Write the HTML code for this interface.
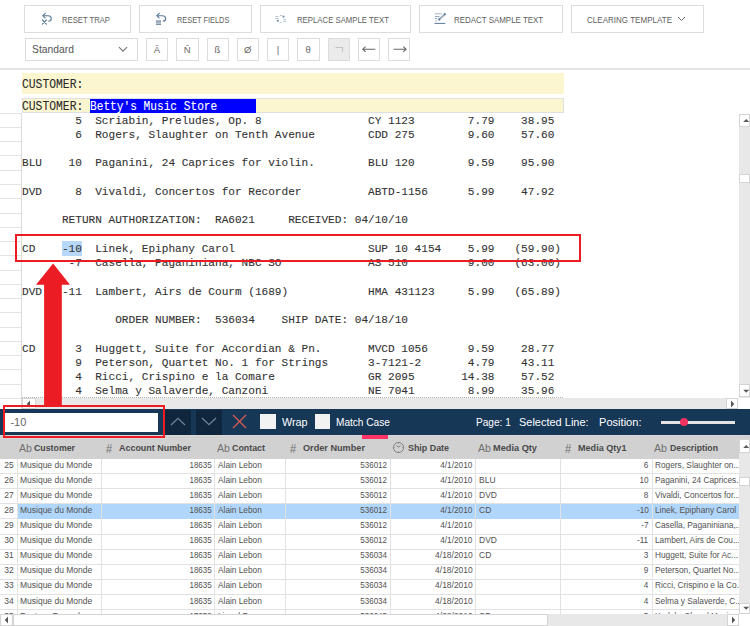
<!DOCTYPE html>
<html><head><meta charset="utf-8"><style>
html,body{margin:0;padding:0;width:750px;height:626px;overflow:hidden;background:#fff}
body > div, body > svg, body div, body svg {position:absolute}
.t{line-height:0;white-space:pre}
</style></head><body>
<div style="left:24px;top:5px;width:107px;height:28px;border:1px solid #dcdcdc;box-sizing:border-box;background:#fff"></div>
<div class="t" style="left:61.50px;top:19.81px;font-family:'Liberation Sans', sans-serif;font-size:9.5px;color:#606060;font-weight:400;transform:scaleX(0.808);transform-origin:0 0;">RESET TRAP</div>
<div style="left:139px;top:5px;width:113px;height:28px;border:1px solid #dcdcdc;box-sizing:border-box;background:#fff"></div>
<div class="t" style="left:176.70px;top:19.81px;font-family:'Liberation Sans', sans-serif;font-size:9.5px;color:#606060;font-weight:400;transform:scaleX(0.776);transform-origin:0 0;">RESET FIELDS</div>
<div style="left:259.5px;top:5px;width:151.5px;height:28px;border:1px solid #dcdcdc;box-sizing:border-box;background:#fff"></div>
<div class="t" style="left:296.70px;top:19.81px;font-family:'Liberation Sans', sans-serif;font-size:9.5px;color:#606060;font-weight:400;transform:scaleX(0.819);transform-origin:0 0;">REPLACE SAMPLE TEXT</div>
<div style="left:418.5px;top:5px;width:144.5px;height:28px;border:1px solid #dcdcdc;box-sizing:border-box;background:#fff"></div>
<div class="t" style="left:454.00px;top:19.81px;font-family:'Liberation Sans', sans-serif;font-size:9.5px;color:#606060;font-weight:400;transform:scaleX(0.835);transform-origin:0 0;">REDACT SAMPLE TEXT</div>
<div style="left:571px;top:5px;width:132.6px;height:28px;border:1px solid #dcdcdc;box-sizing:border-box;background:#fff"></div>
<div class="t" style="left:587.00px;top:19.81px;font-family:'Liberation Sans', sans-serif;font-size:9.5px;color:#606060;font-weight:400;transform:scaleX(0.846);transform-origin:0 0;">CLEARING TEMPLATE</div>
<svg style="left:38px;top:8px" width="20" height="20" viewBox="0 0 20 20">
<g fill="none" stroke="#5b7a98" stroke-width="1.15" stroke-linecap="round" stroke-linejoin="round">
<path d="M5 7.7 H10.2 C13.8 7.7 14.6 12.6 10.9 13.1"/>
<path d="M7.3 5.4 L4.9 7.7 L7.1 9.9"/>
<path d="M4.4 12 L8.4 16.1 M8.4 12 L4.4 16.1"/>
</g></svg>
<svg style="left:152px;top:8px" width="20" height="20" viewBox="0 0 20 20">
<g fill="none" stroke="#5b7a98" stroke-width="1.15" stroke-linecap="round" stroke-linejoin="round">
<path d="M5 7.7 H10.5 C14.3 7.7 14.8 12.6 11.3 13.1"/>
<path d="M7.3 5.4 L4.9 7.7 L7.1 9.9"/>
</g>
<rect x="3.9" y="12.1" width="5.1" height="3.6" fill="#5b7a98" opacity=".6"/>
<rect x="3.9" y="16" width="5.1" height="0.9" fill="#5b7a98" opacity=".9"/>
</svg>
<svg style="left:270px;top:8px" width="20" height="20" viewBox="0 0 20 20">
<g fill="#5b7a98">
<rect x="5.1" y="8" width="3.5" height="0.9" opacity=".45"/><rect x="5.1" y="10" width="3.5" height="0.9" opacity=".45"/>
<rect x="9.9" y="7.2" width="1.9" height="0.7" opacity=".7"/>
<rect x="12.6" y="7.7" width="1.8" height="1.9" opacity=".9"/>
<rect x="7" y="12" width="1.8" height="1.6" opacity=".9"/>
<rect x="9.6" y="14.2" width="2.2" height="0.7" opacity=".6"/>
<rect x="13.4" y="11.2" width="2.6" height="0.9" opacity=".5"/><rect x="13.4" y="13" width="2.6" height="0.9" opacity=".5"/>
</g></svg>
<svg style="left:428px;top:8px" width="20" height="20" viewBox="0 0 20 20">
<g fill="#5b7a98">
<rect x="6.9" y="5.1" width="6.8" height="1.3" opacity=".45"/>
<rect x="6.9" y="8.1" width="4.6" height="0.8" opacity=".8"/>
<rect x="6.9" y="10.2" width="2.4" height="0.8" opacity=".8"/>
<rect x="6.9" y="12.5" width="2.7" height="1" opacity=".45"/>
<rect x="6.5" y="14.9" width="10.9" height="1.1" opacity=".9"/>
</g>
<path d="M10.6 12 L17.3 5.8" stroke="#5b7a98" stroke-width="1.9" opacity=".6"/>
<path d="M10.6 12 L11.9 10.8 M16.2 6.8 L17.5 5.6" stroke="#5b7a98" stroke-width="2" opacity=".9"/>
</svg>
<svg style="left:677px;top:16px" width="9" height="6" viewBox="0 0 9 6"><path d="M1 1 L4.5 4.5 L8 1" fill="none" stroke="#666" stroke-width="1"/></svg>
<div style="left:24.5px;top:38px;width:113.0px;height:22.5px;border:1px solid #dcdcdc;box-sizing:border-box;background:#fff"></div>
<div class="t" style="left:32.00px;top:48.99px;font-family:'Liberation Sans', sans-serif;font-size:11px;color:#555;font-weight:400;transform:scaleX(0.938);transform-origin:0 0;">Standard</div>
<svg style="left:118px;top:45.6px" width="10" height="7" viewBox="0 0 10 7"><path d="M1 1.2 L5 5.2 L9 1.2" fill="none" stroke="#777" stroke-width="1.2"/></svg>
<div style="left:146.0px;top:38px;width:22.3px;height:22.5px;border:1px solid #dcdcdc;box-sizing:border-box;background:#fff"></div>
<div class="t" style="left:146.00px;top:50px;width:22px;text-align:center;font-family:'Liberation Sans', sans-serif;font-size:9.5px;color:#666">Ã</div>
<div style="left:176.25px;top:38px;width:22.3px;height:22.5px;border:1px solid #dcdcdc;box-sizing:border-box;background:#fff"></div>
<div class="t" style="left:176.25px;top:50px;width:22px;text-align:center;font-family:'Liberation Sans', sans-serif;font-size:9.5px;color:#666">Ñ</div>
<div style="left:206.5px;top:38px;width:22.3px;height:22.5px;border:1px solid #dcdcdc;box-sizing:border-box;background:#fff"></div>
<div class="t" style="left:206.50px;top:50px;width:22px;text-align:center;font-family:'Liberation Sans', sans-serif;font-size:9.5px;color:#666">ß</div>
<div style="left:236.75px;top:38px;width:22.3px;height:22.5px;border:1px solid #dcdcdc;box-sizing:border-box;background:#fff"></div>
<div class="t" style="left:236.75px;top:50px;width:22px;text-align:center;font-family:'Liberation Sans', sans-serif;font-size:9.5px;color:#666">Ø</div>
<div style="left:267.0px;top:38px;width:22.3px;height:22.5px;border:1px solid #dcdcdc;box-sizing:border-box;background:#fff"></div>
<div class="t" style="left:267.00px;top:50px;width:22px;text-align:center;font-family:'Liberation Sans', sans-serif;font-size:9.5px;color:#666">|</div>
<div style="left:297.25px;top:38px;width:22.3px;height:22.5px;border:1px solid #dcdcdc;box-sizing:border-box;background:#fff"></div>
<div class="t" style="left:297.25px;top:50px;width:22px;text-align:center;font-family:'Liberation Sans', sans-serif;font-size:9.5px;color:#666">θ</div>
<div style="left:327.5px;top:38px;width:22.3px;height:22.5px;border:1px solid #dcdcdc;box-sizing:border-box;background:#ebebeb"></div>
<div style="left:357.75px;top:38px;width:22.3px;height:22.5px;border:1px solid #dcdcdc;box-sizing:border-box;background:#fff"></div>
<div style="left:388.0px;top:38px;width:22.3px;height:22.5px;border:1px solid #dcdcdc;box-sizing:border-box;background:#fff"></div>
<svg style="left:335px;top:46px" width="9" height="7"><path d="M0.5 1.5 H7.5 V5.8" fill="none" stroke="#c2c2c2" stroke-width="1.1"/></svg>
<svg style="left:362px;top:46px" width="14" height="7" viewBox="0 0 14 7"><path d="M0.8 3.2 H13.3 M3.6 0.6 L0.8 3.2 L3.6 5.8" fill="none" stroke="#666" stroke-width="1.1"/></svg>
<svg style="left:393px;top:46px" width="14" height="7" viewBox="0 0 14 7"><path d="M0.6 3.2 H13.1 M10.3 0.6 L13.1 3.2 L10.3 5.8" fill="none" stroke="#666" stroke-width="1.1"/></svg>
<div style="left:0px;top:68.3px;width:750px;height:1.3px;background:#e4e4e4"></div>
<div style="left:22px;top:72.6px;width:542.2px;height:21.6px;background:#fcf6d0"></div>
<div style="left:22px;top:97.6px;width:541.8px;height:15.8px;background:#fcf6d0;border:1px solid #e0e0e0;box-sizing:border-box"></div>
<div style="left:89.9px;top:98.5px;width:166.3px;height:14.0px;background:#0000ff"></div>
<div style="left:21px;top:113px;width:1px;height:296px;background:#dcdcdc"></div>
<div style="left:0px;top:112.7px;width:21px;height:1.0px;background:#e3e3e3"></div>
<div style="left:0px;top:126.96px;width:21px;height:1.0px;background:#e3e3e3"></div>
<div style="left:0px;top:141.22px;width:21px;height:1.0px;background:#e3e3e3"></div>
<div style="left:0px;top:155.48px;width:21px;height:1.0px;background:#e3e3e3"></div>
<div style="left:0px;top:169.74px;width:21px;height:1.0px;background:#e3e3e3"></div>
<div style="left:0px;top:184.0px;width:21px;height:1.0px;background:#e3e3e3"></div>
<div style="left:0px;top:198.26px;width:21px;height:1.0px;background:#e3e3e3"></div>
<div style="left:0px;top:212.52px;width:21px;height:1.0px;background:#e3e3e3"></div>
<div style="left:0px;top:226.78px;width:21px;height:1.0px;background:#e3e3e3"></div>
<div style="left:0px;top:241.04px;width:21px;height:1.0px;background:#e3e3e3"></div>
<div style="left:0px;top:255.3px;width:21px;height:1.0px;background:#e3e3e3"></div>
<div style="left:0px;top:269.56px;width:21px;height:1.0px;background:#e3e3e3"></div>
<div style="left:0px;top:283.82px;width:21px;height:1.0px;background:#e3e3e3"></div>
<div style="left:0px;top:298.08px;width:21px;height:1.0px;background:#e3e3e3"></div>
<div style="left:0px;top:312.34px;width:21px;height:1.0px;background:#e3e3e3"></div>
<div style="left:0px;top:326.6px;width:21px;height:1.0px;background:#e3e3e3"></div>
<div style="left:0px;top:340.86px;width:21px;height:1.0px;background:#e3e3e3"></div>
<div style="left:0px;top:355.12px;width:21px;height:1.0px;background:#e3e3e3"></div>
<div style="left:0px;top:369.38px;width:21px;height:1.0px;background:#e3e3e3"></div>
<div style="left:0px;top:383.64px;width:21px;height:1.0px;background:#e3e3e3"></div>
<div style="left:0px;top:397.9px;width:21px;height:1.0px;background:#e3e3e3"></div>
<div style="left:62px;top:241.4px;width:20px;height:14.3px;background:#b7d8fa"></div>
<div class="t" style="left:22.20px;top:85.31px;font-family:'Liberation Mono', monospace;font-size:12px;color:#2a2a2a;font-weight:400;transform:scaleX(0.945);transform-origin:0 0;-webkit-text-stroke:0.1px #2a2a2a">CUSTOMER:</div>
<div class="t" style="left:22.20px;top:107.31px;font-family:'Liberation Mono', monospace;font-size:12px;color:#2a2a2a;font-weight:400;transform:scaleX(0.945);transform-origin:0 0;-webkit-text-stroke:0.1px #2a2a2a">CUSTOMER:</div>
<div class="t" style="left:89.80px;top:107.31px;font-family:'Liberation Mono', monospace;font-size:12px;color:#fff;font-weight:400;transform:scaleX(0.93);transform-origin:0 0;-webkit-text-stroke:0.1px #fff">Betty's&nbsp;Music&nbsp;Store</div>
<div style="left:22px;top:113.4px;width:717px;height:284px;overflow:hidden">
<div class="t" style="left:-0.4px;top:7.16px;font-family:'Liberation Mono', monospace;font-size:11.8px;color:#333;transform:scaleX(0.94);transform-origin:0 0;white-space:pre;-webkit-text-stroke:0.1px #333">        5  Scriabin, Preludes, Op. 8                CY 1123        7.79    38.95</div>
<div class="t" style="left:-0.4px;top:21.42px;font-family:'Liberation Mono', monospace;font-size:11.8px;color:#333;transform:scaleX(0.94);transform-origin:0 0;white-space:pre;-webkit-text-stroke:0.1px #333">        6  Rogers, Slaughter on Tenth Avenue        CDD 275        9.60    57.60</div>
<div class="t" style="left:-0.4px;top:49.94px;font-family:'Liberation Mono', monospace;font-size:11.8px;color:#333;transform:scaleX(0.94);transform-origin:0 0;white-space:pre;-webkit-text-stroke:0.1px #333">BLU    10  Paganini, 24 Caprices for violin.        BLU 120        9.59    95.90</div>
<div class="t" style="left:-0.4px;top:78.46px;font-family:'Liberation Mono', monospace;font-size:11.8px;color:#333;transform:scaleX(0.94);transform-origin:0 0;white-space:pre;-webkit-text-stroke:0.1px #333">DVD     8  Vivaldi, Concertos for Recorder          ABTD-1156      5.99    47.92</div>
<div class="t" style="left:-0.4px;top:106.98px;font-family:'Liberation Mono', monospace;font-size:11.8px;color:#333;transform:scaleX(0.94);transform-origin:0 0;white-space:pre;-webkit-text-stroke:0.1px #333">      RETURN AUTHORIZATION:  RA6021     RECEIVED: 04/10/10</div>
<div class="t" style="left:-0.4px;top:135.50px;font-family:'Liberation Mono', monospace;font-size:11.8px;color:#333;transform:scaleX(0.94);transform-origin:0 0;white-space:pre;-webkit-text-stroke:0.1px #333">CD    -10  Linek, Epiphany Carol                    SUP 10 4154    5.99   (59.90)</div>
<div class="t" style="left:-0.4px;top:149.76px;font-family:'Liberation Mono', monospace;font-size:11.8px;color:#333;transform:scaleX(0.94);transform-origin:0 0;white-space:pre;-webkit-text-stroke:0.1px #333">       -7  Casella, Paganiniana, NBC SO             AS 510         9.00   (63.00)</div>
<div class="t" style="left:-0.4px;top:178.28px;font-family:'Liberation Mono', monospace;font-size:11.8px;color:#333;transform:scaleX(0.94);transform-origin:0 0;white-space:pre;-webkit-text-stroke:0.1px #333">DVD   -11  Lambert, Airs de Courm (1689)            HMA 431123     5.99   (65.89)</div>
<div class="t" style="left:-0.4px;top:206.80px;font-family:'Liberation Mono', monospace;font-size:11.8px;color:#333;transform:scaleX(0.94);transform-origin:0 0;white-space:pre;-webkit-text-stroke:0.1px #333">              ORDER NUMBER:  536034    SHIP DATE: 04/18/10</div>
<div class="t" style="left:-0.4px;top:235.32px;font-family:'Liberation Mono', monospace;font-size:11.8px;color:#333;transform:scaleX(0.94);transform-origin:0 0;white-space:pre;-webkit-text-stroke:0.1px #333">CD      3  Huggett, Suite for Accordian &amp; Pn.       MVCD 1056      9.59    28.77</div>
<div class="t" style="left:-0.4px;top:249.58px;font-family:'Liberation Mono', monospace;font-size:11.8px;color:#333;transform:scaleX(0.94);transform-origin:0 0;white-space:pre;-webkit-text-stroke:0.1px #333">        9  Peterson, Quartet No. 1 for Strings      3-7121-2       4.79    43.11</div>
<div class="t" style="left:-0.4px;top:263.84px;font-family:'Liberation Mono', monospace;font-size:11.8px;color:#333;transform:scaleX(0.94);transform-origin:0 0;white-space:pre;-webkit-text-stroke:0.1px #333">        4  Ricci, Crispino e la Comare              GR 2095       14.38    57.52</div>
<div class="t" style="left:-0.4px;top:278.10px;font-family:'Liberation Mono', monospace;font-size:11.8px;color:#333;transform:scaleX(0.94);transform-origin:0 0;white-space:pre;-webkit-text-stroke:0.1px #333">        4  Selma y Salaverde, Canzoni               NE 7041        8.99    35.96</div>
</div>
<div style="left:15.4px;top:234px;width:565.6px;height:27.8px;border:2px solid #ec1c24;box-sizing:border-box"></div>
<div style="left:739.4px;top:114px;width:10.6px;height:283.5px;background:#e8e8e8"></div>
<div style="left:739.4px;top:114px;width:10.6px;height:13.2px;background:#fff;border:1px solid #d4d4d4;box-sizing:border-box"></div>
<div style="left:739.4px;top:174.3px;width:10.6px;height:8.4px;background:#fff;border:1px solid #d4d4d4;box-sizing:border-box"></div>
<div style="left:739.4px;top:384.2px;width:10.6px;height:12.7px;background:#fff;border:1px solid #d4d4d4;box-sizing:border-box"></div>
<svg style="left:742px;top:118px" width="8" height="5"><path d="M1.2 4 L4.2 1 L7.2 4 Z" fill="#5a5a5a"/></svg>
<svg style="left:742px;top:389px" width="8" height="5"><path d="M1.2 0.8 L4.2 3.8 L7.2 0.8 Z" fill="#5a5a5a"/></svg>
<div style="left:22px;top:397.5px;width:717.4px;height:11.7px;background:#e8e8e8"></div>
<div style="left:22px;top:397.3px;width:541.2px;height:1.0px;border-top:1px dotted #b0b0b0;box-sizing:border-box"></div>
<div style="left:22px;top:397.5px;width:13.5px;height:11.3px;background:#fff;border:1px solid #d4d4d4;box-sizing:border-box"></div>
<div style="left:726.2px;top:397.5px;width:12.2px;height:11.3px;background:#fff;border:1px solid #d4d4d4;box-sizing:border-box"></div>
<div style="left:738.4px;top:397.5px;width:11.6px;height:11.7px;background:#fff"></div>
<svg style="left:26px;top:400px" width="5" height="8"><path d="M4 0.5 L0.8 4 L4 7.5 Z" fill="#555"/></svg>
<svg style="left:730px;top:400px" width="5" height="8"><path d="M1 0.5 L4.2 4 L1 7.5 Z" fill="#555"/></svg>
<svg style="left:35px;top:263px" width="36" height="143" viewBox="0 0 36 143"><path d="M18.1 0.5 L35 21.7 L26.8 21.7 L26.8 142.3 L9.1 142.3 L9.1 21.7 L1 21.7 Z" fill="#ec1c24"/></svg>
<div style="left:0px;top:409px;width:750px;height:26.2px;background:#173757"></div>
<div style="left:0px;top:435.2px;width:750px;height:3.8px;background:#d6d6d6"></div>
<div style="left:0px;top:437px;width:750px;height:1.3px;background:#cacaca"></div>
<div style="left:3.8px;top:412.5px;width:154.2px;height:19.0px;background:#fff"></div>
<div class="t" style="left:10.40px;top:422.19px;font-family:'Liberation Sans', sans-serif;font-size:11px;color:#666;font-weight:400;transform:scaleX(1.0);transform-origin:0 0;">-10</div>
<div style="left:165.4px;top:410px;width:25.6px;height:24.5px;background:#10263d"></div>
<div style="left:196.2px;top:410px;width:25.7px;height:24.5px;background:#10263d"></div>
<svg style="left:170px;top:417px" width="16" height="9"><path d="M1 8 L8 1.3 L15 8" fill="none" stroke="#6d8399" stroke-width="1.3"/></svg>
<svg style="left:201px;top:417px" width="16" height="9"><path d="M1 1 L8 7.7 L15 1" fill="none" stroke="#6d8399" stroke-width="1.3"/></svg>
<svg style="left:232px;top:414px" width="15" height="15"><path d="M1 1 L14 14 M14 1 L1 14" fill="none" stroke="#d25a52" stroke-width="1.4"/></svg>
<div style="left:260.2px;top:413.8px;width:15.7px;height:15.2px;background:#f2f2f2"></div>
<div style="left:314.6px;top:413.8px;width:15.7px;height:15.2px;background:#f2f2f2"></div>
<div class="t" style="left:281.80px;top:421.69px;font-family:'Liberation Sans', sans-serif;font-size:11px;color:#fff;font-weight:400;transform:scaleX(0.981);transform-origin:0 0;">Wrap</div>
<div class="t" style="left:336.20px;top:421.69px;font-family:'Liberation Sans', sans-serif;font-size:11px;color:#fff;font-weight:400;transform:scaleX(0.917);transform-origin:0 0;">Match&nbsp;Case</div>
<div class="t" style="left:475.50px;top:421.69px;font-family:'Liberation Sans', sans-serif;font-size:11px;color:#fff;font-weight:400;transform:scaleX(0.918);transform-origin:0 0;">Page:&nbsp;1</div>
<div class="t" style="left:519.20px;top:421.69px;font-family:'Liberation Sans', sans-serif;font-size:11px;color:#fff;font-weight:400;transform:scaleX(0.998);transform-origin:0 0;">Selected&nbsp;Line:</div>
<div class="t" style="left:599.20px;top:421.69px;font-family:'Liberation Sans', sans-serif;font-size:11px;color:#fff;font-weight:400;transform:scaleX(1.007);transform-origin:0 0;">Position:</div>
<div style="left:661px;top:421px;width:73.7px;height:3px;background:#e4e4e4"></div>
<div style="left:680px;top:418.4px;width:8px;height:8px;border-radius:50%;background:#f2325f"></div>
<div style="left:361.8px;top:435.4px;width:26.2px;height:3.8px;background:#ff3366"></div>
<div style="left:2.5px;top:405.3px;width:162.2px;height:32.5px;border:2px solid #ec1c24;box-sizing:border-box"></div>
<div style="left:0px;top:439px;width:739.4px;height:20px;background:#d1d1d1"></div>
<div style="left:0;top:0;width:750px;height:614.2px;overflow:hidden">
<div style="left:0px;top:473.1px;width:739.4px;height:1.0px;background:#e2e2e2"></div>
<div class="t" style="right:736.80px;top:464.67px;font-family:'Liberation Sans', sans-serif;font-size:9.6px;color:#525252;font-weight:400;transform:scaleX(0.885);transform-origin:100% 0;">25</div>
<div class="t" style="left:19.60px;top:464.67px;font-family:'Liberation Sans', sans-serif;font-size:9.6px;color:#525252;font-weight:400;transform:scaleX(0.885);transform-origin:0 0;">Musique du Monde</div>
<div class="t" style="right:538.00px;top:464.67px;font-family:'Liberation Sans', sans-serif;font-size:9.6px;color:#525252;font-weight:400;transform:scaleX(0.833);transform-origin:100% 0;">18635</div>
<div class="t" style="left:218.00px;top:464.67px;font-family:'Liberation Sans', sans-serif;font-size:9.6px;color:#525252;font-weight:400;transform:scaleX(0.865);transform-origin:0 0;">Alain Lebon</div>
<div class="t" style="right:363.00px;top:464.67px;font-family:'Liberation Sans', sans-serif;font-size:9.6px;color:#525252;font-weight:400;transform:scaleX(0.833);transform-origin:100% 0;">536012</div>
<div class="t" style="right:277.40px;top:464.67px;font-family:'Liberation Sans', sans-serif;font-size:9.6px;color:#525252;font-weight:400;transform:scaleX(0.86);transform-origin:100% 0;">4/1/2010</div>
<div class="t" style="left:478.50px;top:464.67px;font-family:'Liberation Sans', sans-serif;font-size:9.6px;color:#525252;font-weight:400;transform:scaleX(0.885);transform-origin:0 0;"></div>
<div class="t" style="right:101.50px;top:464.67px;font-family:'Liberation Sans', sans-serif;font-size:9.6px;color:#525252;font-weight:400;transform:scaleX(0.854);transform-origin:100% 0;">6</div>
<div class="t" style="left:655.00px;top:464.67px;font-family:'Liberation Sans', sans-serif;font-size:9.6px;color:#525252;font-weight:400;transform:scaleX(0.865);transform-origin:0 0;">Rogers, Slaughter on...</div>
<div style="left:0px;top:488.2px;width:739.4px;height:1.0px;background:#e2e2e2"></div>
<div class="t" style="right:736.80px;top:479.77px;font-family:'Liberation Sans', sans-serif;font-size:9.6px;color:#525252;font-weight:400;transform:scaleX(0.885);transform-origin:100% 0;">26</div>
<div class="t" style="left:19.60px;top:479.77px;font-family:'Liberation Sans', sans-serif;font-size:9.6px;color:#525252;font-weight:400;transform:scaleX(0.885);transform-origin:0 0;">Musique du Monde</div>
<div class="t" style="right:538.00px;top:479.77px;font-family:'Liberation Sans', sans-serif;font-size:9.6px;color:#525252;font-weight:400;transform:scaleX(0.833);transform-origin:100% 0;">18635</div>
<div class="t" style="left:218.00px;top:479.77px;font-family:'Liberation Sans', sans-serif;font-size:9.6px;color:#525252;font-weight:400;transform:scaleX(0.865);transform-origin:0 0;">Alain Lebon</div>
<div class="t" style="right:363.00px;top:479.77px;font-family:'Liberation Sans', sans-serif;font-size:9.6px;color:#525252;font-weight:400;transform:scaleX(0.833);transform-origin:100% 0;">536012</div>
<div class="t" style="right:277.40px;top:479.77px;font-family:'Liberation Sans', sans-serif;font-size:9.6px;color:#525252;font-weight:400;transform:scaleX(0.86);transform-origin:100% 0;">4/1/2010</div>
<div class="t" style="left:478.50px;top:479.77px;font-family:'Liberation Sans', sans-serif;font-size:9.6px;color:#525252;font-weight:400;transform:scaleX(0.885);transform-origin:0 0;">BLU</div>
<div class="t" style="right:101.50px;top:479.77px;font-family:'Liberation Sans', sans-serif;font-size:9.6px;color:#525252;font-weight:400;transform:scaleX(0.854);transform-origin:100% 0;">10</div>
<div class="t" style="left:655.00px;top:479.77px;font-family:'Liberation Sans', sans-serif;font-size:9.6px;color:#525252;font-weight:400;transform:scaleX(0.865);transform-origin:0 0;">Paganini, 24 Caprices...</div>
<div style="left:0px;top:503.3px;width:739.4px;height:1.0px;background:#e2e2e2"></div>
<div class="t" style="right:736.80px;top:494.87px;font-family:'Liberation Sans', sans-serif;font-size:9.6px;color:#525252;font-weight:400;transform:scaleX(0.885);transform-origin:100% 0;">27</div>
<div class="t" style="left:19.60px;top:494.87px;font-family:'Liberation Sans', sans-serif;font-size:9.6px;color:#525252;font-weight:400;transform:scaleX(0.885);transform-origin:0 0;">Musique du Monde</div>
<div class="t" style="right:538.00px;top:494.87px;font-family:'Liberation Sans', sans-serif;font-size:9.6px;color:#525252;font-weight:400;transform:scaleX(0.833);transform-origin:100% 0;">18635</div>
<div class="t" style="left:218.00px;top:494.87px;font-family:'Liberation Sans', sans-serif;font-size:9.6px;color:#525252;font-weight:400;transform:scaleX(0.865);transform-origin:0 0;">Alain Lebon</div>
<div class="t" style="right:363.00px;top:494.87px;font-family:'Liberation Sans', sans-serif;font-size:9.6px;color:#525252;font-weight:400;transform:scaleX(0.833);transform-origin:100% 0;">536012</div>
<div class="t" style="right:277.40px;top:494.87px;font-family:'Liberation Sans', sans-serif;font-size:9.6px;color:#525252;font-weight:400;transform:scaleX(0.86);transform-origin:100% 0;">4/1/2010</div>
<div class="t" style="left:478.50px;top:494.87px;font-family:'Liberation Sans', sans-serif;font-size:9.6px;color:#525252;font-weight:400;transform:scaleX(0.885);transform-origin:0 0;">DVD</div>
<div class="t" style="right:101.50px;top:494.87px;font-family:'Liberation Sans', sans-serif;font-size:9.6px;color:#525252;font-weight:400;transform:scaleX(0.854);transform-origin:100% 0;">8</div>
<div class="t" style="left:655.00px;top:494.87px;font-family:'Liberation Sans', sans-serif;font-size:9.6px;color:#525252;font-weight:400;transform:scaleX(0.865);transform-origin:0 0;">Vivaldi, Concertos for...</div>
<div style="left:0px;top:518.4px;width:739.4px;height:1.0px;background:#e2e2e2"></div>
<div style="left:17.5px;top:504.3px;width:721.9px;height:15.1px;background:#b1d6fb"></div>
<div class="t" style="right:736.80px;top:509.97px;font-family:'Liberation Sans', sans-serif;font-size:9.6px;color:#525252;font-weight:400;transform:scaleX(0.885);transform-origin:100% 0;">28</div>
<div class="t" style="left:19.60px;top:509.97px;font-family:'Liberation Sans', sans-serif;font-size:9.6px;color:#525252;font-weight:400;transform:scaleX(0.885);transform-origin:0 0;">Musique du Monde</div>
<div class="t" style="right:538.00px;top:509.97px;font-family:'Liberation Sans', sans-serif;font-size:9.6px;color:#525252;font-weight:400;transform:scaleX(0.833);transform-origin:100% 0;">18635</div>
<div class="t" style="left:218.00px;top:509.97px;font-family:'Liberation Sans', sans-serif;font-size:9.6px;color:#525252;font-weight:400;transform:scaleX(0.865);transform-origin:0 0;">Alain Lebon</div>
<div class="t" style="right:363.00px;top:509.97px;font-family:'Liberation Sans', sans-serif;font-size:9.6px;color:#525252;font-weight:400;transform:scaleX(0.833);transform-origin:100% 0;">536012</div>
<div class="t" style="right:277.40px;top:509.97px;font-family:'Liberation Sans', sans-serif;font-size:9.6px;color:#525252;font-weight:400;transform:scaleX(0.86);transform-origin:100% 0;">4/1/2010</div>
<div class="t" style="left:478.50px;top:509.97px;font-family:'Liberation Sans', sans-serif;font-size:9.6px;color:#525252;font-weight:400;transform:scaleX(0.885);transform-origin:0 0;">CD</div>
<div class="t" style="right:101.50px;top:509.97px;font-family:'Liberation Sans', sans-serif;font-size:9.6px;color:#525252;font-weight:400;transform:scaleX(0.854);transform-origin:100% 0;">-10</div>
<div class="t" style="left:655.00px;top:509.97px;font-family:'Liberation Sans', sans-serif;font-size:9.6px;color:#525252;font-weight:400;transform:scaleX(0.865);transform-origin:0 0;">Linek, Epiphany Carol</div>
<div style="left:0px;top:533.5px;width:739.4px;height:1.0px;background:#e2e2e2"></div>
<div class="t" style="right:736.80px;top:525.07px;font-family:'Liberation Sans', sans-serif;font-size:9.6px;color:#525252;font-weight:400;transform:scaleX(0.885);transform-origin:100% 0;">29</div>
<div class="t" style="left:19.60px;top:525.07px;font-family:'Liberation Sans', sans-serif;font-size:9.6px;color:#525252;font-weight:400;transform:scaleX(0.885);transform-origin:0 0;">Musique du Monde</div>
<div class="t" style="right:538.00px;top:525.07px;font-family:'Liberation Sans', sans-serif;font-size:9.6px;color:#525252;font-weight:400;transform:scaleX(0.833);transform-origin:100% 0;">18635</div>
<div class="t" style="left:218.00px;top:525.07px;font-family:'Liberation Sans', sans-serif;font-size:9.6px;color:#525252;font-weight:400;transform:scaleX(0.865);transform-origin:0 0;">Alain Lebon</div>
<div class="t" style="right:363.00px;top:525.07px;font-family:'Liberation Sans', sans-serif;font-size:9.6px;color:#525252;font-weight:400;transform:scaleX(0.833);transform-origin:100% 0;">536012</div>
<div class="t" style="right:277.40px;top:525.07px;font-family:'Liberation Sans', sans-serif;font-size:9.6px;color:#525252;font-weight:400;transform:scaleX(0.86);transform-origin:100% 0;">4/1/2010</div>
<div class="t" style="left:478.50px;top:525.07px;font-family:'Liberation Sans', sans-serif;font-size:9.6px;color:#525252;font-weight:400;transform:scaleX(0.885);transform-origin:0 0;"></div>
<div class="t" style="right:101.50px;top:525.07px;font-family:'Liberation Sans', sans-serif;font-size:9.6px;color:#525252;font-weight:400;transform:scaleX(0.854);transform-origin:100% 0;">-7</div>
<div class="t" style="left:655.00px;top:525.07px;font-family:'Liberation Sans', sans-serif;font-size:9.6px;color:#525252;font-weight:400;transform:scaleX(0.865);transform-origin:0 0;">Casella, Paganiniana,...</div>
<div style="left:0px;top:548.6px;width:739.4px;height:1.0px;background:#e2e2e2"></div>
<div class="t" style="right:736.80px;top:540.17px;font-family:'Liberation Sans', sans-serif;font-size:9.6px;color:#525252;font-weight:400;transform:scaleX(0.885);transform-origin:100% 0;">30</div>
<div class="t" style="left:19.60px;top:540.17px;font-family:'Liberation Sans', sans-serif;font-size:9.6px;color:#525252;font-weight:400;transform:scaleX(0.885);transform-origin:0 0;">Musique du Monde</div>
<div class="t" style="right:538.00px;top:540.17px;font-family:'Liberation Sans', sans-serif;font-size:9.6px;color:#525252;font-weight:400;transform:scaleX(0.833);transform-origin:100% 0;">18635</div>
<div class="t" style="left:218.00px;top:540.17px;font-family:'Liberation Sans', sans-serif;font-size:9.6px;color:#525252;font-weight:400;transform:scaleX(0.865);transform-origin:0 0;">Alain Lebon</div>
<div class="t" style="right:363.00px;top:540.17px;font-family:'Liberation Sans', sans-serif;font-size:9.6px;color:#525252;font-weight:400;transform:scaleX(0.833);transform-origin:100% 0;">536012</div>
<div class="t" style="right:277.40px;top:540.17px;font-family:'Liberation Sans', sans-serif;font-size:9.6px;color:#525252;font-weight:400;transform:scaleX(0.86);transform-origin:100% 0;">4/1/2010</div>
<div class="t" style="left:478.50px;top:540.17px;font-family:'Liberation Sans', sans-serif;font-size:9.6px;color:#525252;font-weight:400;transform:scaleX(0.885);transform-origin:0 0;">DVD</div>
<div class="t" style="right:101.50px;top:540.17px;font-family:'Liberation Sans', sans-serif;font-size:9.6px;color:#525252;font-weight:400;transform:scaleX(0.854);transform-origin:100% 0;">-11</div>
<div class="t" style="left:655.00px;top:540.17px;font-family:'Liberation Sans', sans-serif;font-size:9.6px;color:#525252;font-weight:400;transform:scaleX(0.865);transform-origin:0 0;">Lambert, Airs de Cou...</div>
<div style="left:0px;top:563.7px;width:739.4px;height:1.0px;background:#e2e2e2"></div>
<div class="t" style="right:736.80px;top:555.27px;font-family:'Liberation Sans', sans-serif;font-size:9.6px;color:#525252;font-weight:400;transform:scaleX(0.885);transform-origin:100% 0;">31</div>
<div class="t" style="left:19.60px;top:555.27px;font-family:'Liberation Sans', sans-serif;font-size:9.6px;color:#525252;font-weight:400;transform:scaleX(0.885);transform-origin:0 0;">Musique du Monde</div>
<div class="t" style="right:538.00px;top:555.27px;font-family:'Liberation Sans', sans-serif;font-size:9.6px;color:#525252;font-weight:400;transform:scaleX(0.833);transform-origin:100% 0;">18635</div>
<div class="t" style="left:218.00px;top:555.27px;font-family:'Liberation Sans', sans-serif;font-size:9.6px;color:#525252;font-weight:400;transform:scaleX(0.865);transform-origin:0 0;">Alain Lebon</div>
<div class="t" style="right:363.00px;top:555.27px;font-family:'Liberation Sans', sans-serif;font-size:9.6px;color:#525252;font-weight:400;transform:scaleX(0.833);transform-origin:100% 0;">536034</div>
<div class="t" style="right:277.40px;top:555.27px;font-family:'Liberation Sans', sans-serif;font-size:9.6px;color:#525252;font-weight:400;transform:scaleX(0.88);transform-origin:100% 0;">4/18/2010</div>
<div class="t" style="left:478.50px;top:555.27px;font-family:'Liberation Sans', sans-serif;font-size:9.6px;color:#525252;font-weight:400;transform:scaleX(0.885);transform-origin:0 0;">CD</div>
<div class="t" style="right:101.50px;top:555.27px;font-family:'Liberation Sans', sans-serif;font-size:9.6px;color:#525252;font-weight:400;transform:scaleX(0.854);transform-origin:100% 0;">3</div>
<div class="t" style="left:655.00px;top:555.27px;font-family:'Liberation Sans', sans-serif;font-size:9.6px;color:#525252;font-weight:400;transform:scaleX(0.865);transform-origin:0 0;">Huggett, Suite for Ac...</div>
<div style="left:0px;top:578.8px;width:739.4px;height:1.0px;background:#e2e2e2"></div>
<div class="t" style="right:736.80px;top:570.37px;font-family:'Liberation Sans', sans-serif;font-size:9.6px;color:#525252;font-weight:400;transform:scaleX(0.885);transform-origin:100% 0;">32</div>
<div class="t" style="left:19.60px;top:570.37px;font-family:'Liberation Sans', sans-serif;font-size:9.6px;color:#525252;font-weight:400;transform:scaleX(0.885);transform-origin:0 0;">Musique du Monde</div>
<div class="t" style="right:538.00px;top:570.37px;font-family:'Liberation Sans', sans-serif;font-size:9.6px;color:#525252;font-weight:400;transform:scaleX(0.833);transform-origin:100% 0;">18635</div>
<div class="t" style="left:218.00px;top:570.37px;font-family:'Liberation Sans', sans-serif;font-size:9.6px;color:#525252;font-weight:400;transform:scaleX(0.865);transform-origin:0 0;">Alain Lebon</div>
<div class="t" style="right:363.00px;top:570.37px;font-family:'Liberation Sans', sans-serif;font-size:9.6px;color:#525252;font-weight:400;transform:scaleX(0.833);transform-origin:100% 0;">536034</div>
<div class="t" style="right:277.40px;top:570.37px;font-family:'Liberation Sans', sans-serif;font-size:9.6px;color:#525252;font-weight:400;transform:scaleX(0.88);transform-origin:100% 0;">4/18/2010</div>
<div class="t" style="left:478.50px;top:570.37px;font-family:'Liberation Sans', sans-serif;font-size:9.6px;color:#525252;font-weight:400;transform:scaleX(0.885);transform-origin:0 0;"></div>
<div class="t" style="right:101.50px;top:570.37px;font-family:'Liberation Sans', sans-serif;font-size:9.6px;color:#525252;font-weight:400;transform:scaleX(0.854);transform-origin:100% 0;">9</div>
<div class="t" style="left:655.00px;top:570.37px;font-family:'Liberation Sans', sans-serif;font-size:9.6px;color:#525252;font-weight:400;transform:scaleX(0.865);transform-origin:0 0;">Peterson, Quartet No...</div>
<div style="left:0px;top:593.9px;width:739.4px;height:1.0px;background:#e2e2e2"></div>
<div class="t" style="right:736.80px;top:585.47px;font-family:'Liberation Sans', sans-serif;font-size:9.6px;color:#525252;font-weight:400;transform:scaleX(0.885);transform-origin:100% 0;">33</div>
<div class="t" style="left:19.60px;top:585.47px;font-family:'Liberation Sans', sans-serif;font-size:9.6px;color:#525252;font-weight:400;transform:scaleX(0.885);transform-origin:0 0;">Musique du Monde</div>
<div class="t" style="right:538.00px;top:585.47px;font-family:'Liberation Sans', sans-serif;font-size:9.6px;color:#525252;font-weight:400;transform:scaleX(0.833);transform-origin:100% 0;">18635</div>
<div class="t" style="left:218.00px;top:585.47px;font-family:'Liberation Sans', sans-serif;font-size:9.6px;color:#525252;font-weight:400;transform:scaleX(0.865);transform-origin:0 0;">Alain Lebon</div>
<div class="t" style="right:363.00px;top:585.47px;font-family:'Liberation Sans', sans-serif;font-size:9.6px;color:#525252;font-weight:400;transform:scaleX(0.833);transform-origin:100% 0;">536034</div>
<div class="t" style="right:277.40px;top:585.47px;font-family:'Liberation Sans', sans-serif;font-size:9.6px;color:#525252;font-weight:400;transform:scaleX(0.88);transform-origin:100% 0;">4/18/2010</div>
<div class="t" style="left:478.50px;top:585.47px;font-family:'Liberation Sans', sans-serif;font-size:9.6px;color:#525252;font-weight:400;transform:scaleX(0.885);transform-origin:0 0;"></div>
<div class="t" style="right:101.50px;top:585.47px;font-family:'Liberation Sans', sans-serif;font-size:9.6px;color:#525252;font-weight:400;transform:scaleX(0.854);transform-origin:100% 0;">4</div>
<div class="t" style="left:655.00px;top:585.47px;font-family:'Liberation Sans', sans-serif;font-size:9.6px;color:#525252;font-weight:400;transform:scaleX(0.865);transform-origin:0 0;">Ricci, Crispino e la Co...</div>
<div style="left:0px;top:609.0px;width:739.4px;height:1.0px;background:#e2e2e2"></div>
<div class="t" style="right:736.80px;top:600.57px;font-family:'Liberation Sans', sans-serif;font-size:9.6px;color:#525252;font-weight:400;transform:scaleX(0.885);transform-origin:100% 0;">34</div>
<div class="t" style="left:19.60px;top:600.57px;font-family:'Liberation Sans', sans-serif;font-size:9.6px;color:#525252;font-weight:400;transform:scaleX(0.885);transform-origin:0 0;">Musique du Monde</div>
<div class="t" style="right:538.00px;top:600.57px;font-family:'Liberation Sans', sans-serif;font-size:9.6px;color:#525252;font-weight:400;transform:scaleX(0.833);transform-origin:100% 0;">18635</div>
<div class="t" style="left:218.00px;top:600.57px;font-family:'Liberation Sans', sans-serif;font-size:9.6px;color:#525252;font-weight:400;transform:scaleX(0.865);transform-origin:0 0;">Alain Lebon</div>
<div class="t" style="right:363.00px;top:600.57px;font-family:'Liberation Sans', sans-serif;font-size:9.6px;color:#525252;font-weight:400;transform:scaleX(0.833);transform-origin:100% 0;">536034</div>
<div class="t" style="right:277.40px;top:600.57px;font-family:'Liberation Sans', sans-serif;font-size:9.6px;color:#525252;font-weight:400;transform:scaleX(0.88);transform-origin:100% 0;">4/18/2010</div>
<div class="t" style="left:478.50px;top:600.57px;font-family:'Liberation Sans', sans-serif;font-size:9.6px;color:#525252;font-weight:400;transform:scaleX(0.885);transform-origin:0 0;"></div>
<div class="t" style="right:101.50px;top:600.57px;font-family:'Liberation Sans', sans-serif;font-size:9.6px;color:#525252;font-weight:400;transform:scaleX(0.854);transform-origin:100% 0;">4</div>
<div class="t" style="left:655.00px;top:600.57px;font-family:'Liberation Sans', sans-serif;font-size:9.6px;color:#525252;font-weight:400;transform:scaleX(0.865);transform-origin:0 0;">Selma y Salaverde, C...</div>
<div style="left:0px;top:624.1px;width:739.4px;height:1.0px;background:#e2e2e2"></div>
<div class="t" style="right:736.80px;top:615.67px;font-family:'Liberation Sans', sans-serif;font-size:9.6px;color:#525252;font-weight:400;transform:scaleX(0.885);transform-origin:100% 0;">35</div>
<div class="t" style="left:19.60px;top:615.67px;font-family:'Liberation Sans', sans-serif;font-size:9.6px;color:#525252;font-weight:400;transform:scaleX(0.885);transform-origin:0 0;">Fantasy Records</div>
<div class="t" style="right:538.00px;top:615.67px;font-family:'Liberation Sans', sans-serif;font-size:9.6px;color:#525252;font-weight:400;transform:scaleX(0.833);transform-origin:100% 0;">17658</div>
<div class="t" style="left:218.00px;top:615.67px;font-family:'Liberation Sans', sans-serif;font-size:9.6px;color:#525252;font-weight:400;transform:scaleX(0.865);transform-origin:0 0;">Lionel Frances</div>
<div class="t" style="right:363.00px;top:615.67px;font-family:'Liberation Sans', sans-serif;font-size:9.6px;color:#525252;font-weight:400;transform:scaleX(0.833);transform-origin:100% 0;">536045</div>
<div class="t" style="right:277.40px;top:615.67px;font-family:'Liberation Sans', sans-serif;font-size:9.6px;color:#525252;font-weight:400;transform:scaleX(0.88);transform-origin:100% 0;">4/28/2010</div>
<div class="t" style="left:478.50px;top:615.67px;font-family:'Liberation Sans', sans-serif;font-size:9.6px;color:#525252;font-weight:400;transform:scaleX(0.885);transform-origin:0 0;">CD</div>
<div class="t" style="right:101.50px;top:615.67px;font-family:'Liberation Sans', sans-serif;font-size:9.6px;color:#525252;font-weight:400;transform:scaleX(0.854);transform-origin:100% 0;">5</div>
<div class="t" style="left:655.00px;top:615.67px;font-family:'Liberation Sans', sans-serif;font-size:9.6px;color:#525252;font-weight:400;transform:scaleX(0.865);transform-origin:0 0;">Kodaly, Choral Music...</div>
<div style="left:17.0px;top:459px;width:1.0px;height:155.2px;background:#e2e2e2"></div>
<div style="left:101.3px;top:459px;width:1.0px;height:155.2px;background:#e2e2e2"></div>
<div style="left:214.3px;top:459px;width:1.0px;height:155.2px;background:#e2e2e2"></div>
<div style="left:284.7px;top:459px;width:1.0px;height:155.2px;background:#e2e2e2"></div>
<div style="left:390.1px;top:459px;width:1.0px;height:155.2px;background:#e2e2e2"></div>
<div style="left:475.0px;top:459px;width:1.0px;height:155.2px;background:#e2e2e2"></div>
<div style="left:559.8px;top:459px;width:1.0px;height:155.2px;background:#e2e2e2"></div>
<div style="left:652.0px;top:459px;width:1.0px;height:155.2px;background:#e2e2e2"></div>
</div>
<div class="t" style="left:19.00px;top:447.61px;font-family:'Liberation Sans', sans-serif;font-size:11.5px;color:#707070;font-weight:400;transform:scaleX(0.92);transform-origin:0 0;">Ab</div>
<div class="t" style="left:34.00px;top:448.41px;font-family:'Liberation Sans', sans-serif;font-size:9.2px;color:#4a4a4a;font-weight:700;transform:scaleX(0.956);transform-origin:0 0;">Customer</div>
<div class="t" style="left:106.00px;top:448.67px;font-family:'Liberation Sans', sans-serif;font-size:12.5px;color:#707070;font-weight:400;transform:scaleX(0.88);transform-origin:0 0;">#</div>
<div class="t" style="left:119.00px;top:448.41px;font-family:'Liberation Sans', sans-serif;font-size:9.2px;color:#4a4a4a;font-weight:700;transform:scaleX(0.973);transform-origin:0 0;">Account&nbsp;Number</div>
<div class="t" style="left:216.50px;top:447.61px;font-family:'Liberation Sans', sans-serif;font-size:11.5px;color:#707070;font-weight:400;transform:scaleX(0.92);transform-origin:0 0;">Ab</div>
<div class="t" style="left:232.00px;top:448.41px;font-family:'Liberation Sans', sans-serif;font-size:9.2px;color:#4a4a4a;font-weight:700;transform:scaleX(0.965);transform-origin:0 0;">Contact</div>
<div class="t" style="left:289.50px;top:448.67px;font-family:'Liberation Sans', sans-serif;font-size:12.5px;color:#707070;font-weight:400;transform:scaleX(0.88);transform-origin:0 0;">#</div>
<div class="t" style="left:302.50px;top:448.41px;font-family:'Liberation Sans', sans-serif;font-size:9.2px;color:#4a4a4a;font-weight:700;transform:scaleX(0.995);transform-origin:0 0;">Order&nbsp;Number</div>
<div class="t" style="left:408.00px;top:448.41px;font-family:'Liberation Sans', sans-serif;font-size:9.2px;color:#4a4a4a;font-weight:700;transform:scaleX(0.967);transform-origin:0 0;">Ship&nbsp;Date</div>
<div class="t" style="left:477.50px;top:447.61px;font-family:'Liberation Sans', sans-serif;font-size:11.5px;color:#707070;font-weight:400;transform:scaleX(0.92);transform-origin:0 0;">Ab</div>
<div class="t" style="left:493.00px;top:448.41px;font-family:'Liberation Sans', sans-serif;font-size:9.2px;color:#4a4a4a;font-weight:700;transform:scaleX(1.002);transform-origin:0 0;">Media&nbsp;Qty</div>
<div class="t" style="left:564.50px;top:448.67px;font-family:'Liberation Sans', sans-serif;font-size:12.5px;color:#707070;font-weight:400;transform:scaleX(0.88);transform-origin:0 0;">#</div>
<div class="t" style="left:577.50px;top:448.41px;font-family:'Liberation Sans', sans-serif;font-size:9.2px;color:#4a4a4a;font-weight:700;transform:scaleX(0.989);transform-origin:0 0;">Media&nbsp;Qty1</div>
<div class="t" style="left:654.00px;top:447.61px;font-family:'Liberation Sans', sans-serif;font-size:11.5px;color:#707070;font-weight:400;transform:scaleX(0.92);transform-origin:0 0;">Ab</div>
<div class="t" style="left:670.00px;top:448.41px;font-family:'Liberation Sans', sans-serif;font-size:9.2px;color:#4a4a4a;font-weight:700;transform:scaleX(0.95);transform-origin:0 0;">Description</div>
<svg style="left:392px;top:441px" width="13" height="13"><circle cx="6.5" cy="6.5" r="5.1" fill="none" stroke="#7a7a7a" stroke-width="0.9"/><path d="M4.3 4.5 L6.5 6.1 L8.7 4.5" fill="none" stroke="#7a7a7a" stroke-width="0.9"/><path d="M6.5 1.6 V2.6 M6.5 10.4 V11.4 M1.6 6.5 H2.6 M10.4 6.5 H11.4" stroke="#7a7a7a" stroke-width="0.9"/></svg>
<div style="left:739.4px;top:439px;width:10.6px;height:175.2px;background:#e8e8e8"></div>
<div style="left:739.4px;top:439px;width:10.6px;height:13.7px;background:#fff;border:1px solid #d4d4d4;box-sizing:border-box"></div>
<div style="left:739.4px;top:477px;width:10.6px;height:9px;background:#fff;border:1px solid #d4d4d4;box-sizing:border-box"></div>
<div style="left:739.4px;top:602.6px;width:10.6px;height:11.2px;background:#fff;border:1px solid #d4d4d4;box-sizing:border-box"></div>
<svg style="left:742px;top:443.5px" width="8" height="5"><path d="M1.2 4 L4.2 1 L7.2 4 Z" fill="#5a5a5a"/></svg>
<svg style="left:742px;top:606px" width="8" height="5"><path d="M1.2 0.8 L4.2 3.8 L7.2 0.8 Z" fill="#5a5a5a"/></svg>
<div style="left:0px;top:614.2px;width:750px;height:11.8px;background:#e8e8e8"></div>
<div style="left:0px;top:614.2px;width:13px;height:11.8px;background:#fff;border:1px solid #d4d4d4;box-sizing:border-box"></div>
<div style="left:13px;top:614.2px;width:534.7px;height:11.8px;background:#fff;border:1px solid #d4d4d4;box-sizing:border-box"></div>
<div style="left:726.7px;top:614.2px;width:12.1px;height:11.8px;background:#fff;border:1px solid #d4d4d4;box-sizing:border-box"></div>
<div style="left:738.8px;top:614.2px;width:11.2px;height:11.8px;background:#fff"></div>
<svg style="left:4px;top:616px" width="5" height="8"><path d="M4 0.5 L0.8 4 L4 7.5 Z" fill="#555"/></svg>
<svg style="left:731px;top:616px" width="5" height="8"><path d="M1 0.5 L4.2 4 L1 7.5 Z" fill="#555"/></svg>
</body></html>
